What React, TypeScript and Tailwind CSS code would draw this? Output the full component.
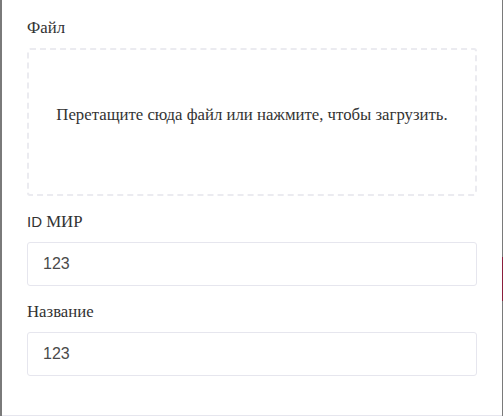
export default function App() {
  return (
    <div className="flex h-[416px] w-[503px] overflow-hidden bg-white">
      <div className="w-[2px] shrink-0 bg-[#7a7a7a]" />
      <div
        className="flex flex-1 flex-col border-b border-[#e6e6ee] px-[25px] pt-[16px] text-[#333]"
        style={{ fontFamily: '"Liberation Serif", serif' }}
      >
        <label className="text-[16.75px] leading-[24px]">Файл</label>
        <div className="mt-2 flex h-[148px] justify-center rounded-[3px] border-2 border-dashed border-[#ebebf0] pt-[53px]">
          <p className="text-[16.75px] leading-[24px]">
            Перетащите сюда файл или нажмите, чтобы загрузить.
          </p>
        </div>

        <label className="mt-[14px] text-[16.75px] leading-[24px]">
          <span className="text-[15px]" style={{ fontFamily: '"Liberation Sans", sans-serif' }}>
            ID
          </span>{" "}
          МИР
        </label>
        <input
          readOnly
          value="123"
          className="mt-2 h-[44px] rounded-[3px] border border-[#e6e6ee] px-[15px] text-[16px] text-[#4a4a4a] outline-none"
          style={{ fontFamily: '"Liberation Sans", sans-serif' }}
        />

        <label className="mt-[14px] text-[16.75px] leading-[24px]">Название</label>
        <input
          readOnly
          value="123"
          className="mt-2 h-[44px] rounded-[3px] border border-[#e6e6ee] px-[15px] text-[16px] text-[#4a4a4a] outline-none"
          style={{ fontFamily: '"Liberation Sans", sans-serif' }}
        />
      </div>
      <div className="flex w-[1px] shrink-0 flex-col bg-[#7a7a7a]">
        <div className="mt-[257px] h-[44px] bg-[#8a1f3d]" />
      </div>
    </div>
  );
}
